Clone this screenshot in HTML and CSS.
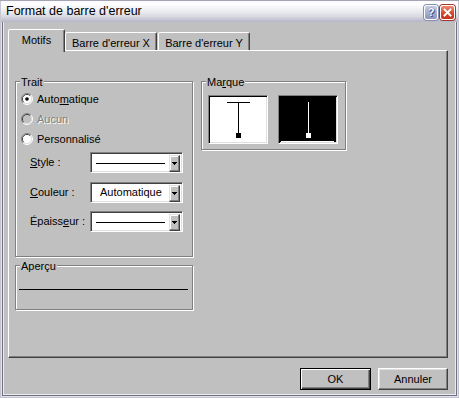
FILE: index.html
```html
<!DOCTYPE html>
<html lang="fr">
<head>
<meta charset="utf-8">
<title>Format de barre d'erreur</title>
<link rel="stylesheet" href="styles.css">
</head>
<body>
<div class="window">
  <div class="titlebar">
    <span class="title">Format de barre d'erreur</span>
    <span class="tb-btn help">?</span>
    <span class="tb-btn close"><svg width="9" height="9" viewBox="0 0 9 9"><path d="M1.5 1.5L7.5 7.5M7.5 1.5L1.5 7.5" stroke="#fff" stroke-width="2" stroke-linecap="square"/></svg></span>
  </div>
  <div class="body">
    <div class="tabs">
      <div class="tab active">Motifs</div>
      <div class="tab tab-x">Barre d'erreur X</div>
      <div class="tab tab-y">Barre d'erreur Y</div>
    </div>
    <div class="panel">
      <div class="col-left">
        <div class="group trait">
          <span class="legend">Trait</span>
          <div class="radio-row">
            <svg class="radio" width="12" height="12" viewBox="0 0 12 12"><circle cx="6" cy="6" r="5" fill="#fff"/><path d="M2.1 9.9A5.5 5.5 0 0 1 9.9 2.1" fill="none" stroke="#808080"/><path d="M9.9 2.1A5.5 5.5 0 0 1 2.1 9.9" fill="none" stroke="#fff"/><path d="M2.8 9.2A4.5 4.5 0 0 1 9.2 2.8" fill="none" stroke="#404040"/><path d="M9.2 2.8A4.5 4.5 0 0 1 2.8 9.2" fill="none" stroke="#dfdfdf"/><circle cx="6" cy="6" r="3.8" fill="#fff"/><circle cx="6" cy="6" r="1.8" fill="#000"/></svg>
            <span>Auto<u>m</u>atique</span>
          </div>
          <div class="radio-row disabled">
            <svg class="radio" width="12" height="12" viewBox="0 0 12 12"><circle cx="6" cy="6" r="5" fill="#c0c0c0"/><path d="M2.1 9.9A5.5 5.5 0 0 1 9.9 2.1" fill="none" stroke="#808080"/><path d="M9.9 2.1A5.5 5.5 0 0 1 2.1 9.9" fill="none" stroke="#fff"/><path d="M2.8 9.2A4.5 4.5 0 0 1 9.2 2.8" fill="none" stroke="#404040"/><path d="M9.2 2.8A4.5 4.5 0 0 1 2.8 9.2" fill="none" stroke="#dfdfdf"/><circle cx="6" cy="6" r="3.8" fill="#c0c0c0"/></svg>
            <span>Aucun</span>
          </div>
          <div class="radio-row">
            <svg class="radio" width="12" height="12" viewBox="0 0 12 12"><circle cx="6" cy="6" r="5" fill="#fff"/><path d="M2.1 9.9A5.5 5.5 0 0 1 9.9 2.1" fill="none" stroke="#808080"/><path d="M9.9 2.1A5.5 5.5 0 0 1 2.1 9.9" fill="none" stroke="#fff"/><path d="M2.8 9.2A4.5 4.5 0 0 1 9.2 2.8" fill="none" stroke="#404040"/><path d="M9.2 2.8A4.5 4.5 0 0 1 2.8 9.2" fill="none" stroke="#dfdfdf"/><circle cx="6" cy="6" r="3.8" fill="#fff"/></svg>
            <span>Personnalisé</span>
          </div>
          <div class="field f1">
            <span class="flabel"><u>S</u>tyle :</span>
            <div class="combo">
              <div class="combo-value"><span class="sample-line"></span></div>
              <span class="drop"><svg width="5" height="3" viewBox="0 0 5 3" shape-rendering="crispEdges"><path d="M0 0h5v1H0zM1 1h3v1H1zM2 2h1v1H2z" fill="#000"/></svg></span>
            </div>
          </div>
          <div class="field f2">
            <span class="flabel"><u>C</u>ouleur :</span>
            <div class="combo">
              <div class="combo-value"><span class="combo-text">Automatique</span></div>
              <span class="drop"><svg width="5" height="3" viewBox="0 0 5 3" shape-rendering="crispEdges"><path d="M0 0h5v1H0zM1 1h3v1H1zM2 2h1v1H2z" fill="#000"/></svg></span>
            </div>
          </div>
          <div class="field f3">
            <span class="flabel">Épaiss<u>e</u>ur :</span>
            <div class="combo">
              <div class="combo-value"><span class="sample-line"></span></div>
              <span class="drop"><svg width="5" height="3" viewBox="0 0 5 3" shape-rendering="crispEdges"><path d="M0 0h5v1H0zM1 1h3v1H1zM2 2h1v1H2z" fill="#000"/></svg></span>
            </div>
          </div>
        </div>
        <div class="group apercu">
          <span class="legend">Aperçu</span>
          <div class="preview-line"></div>
        </div>
      </div>
      <div class="group marque">
        <span class="legend">Ma<u>r</u>que</span>
        <div class="marks">
          <div class="mbox light">
            <svg width="56" height="45" viewBox="0 0 56 45" shape-rendering="crispEdges"><rect x="17" y="5" width="23" height="1" fill="#000"/><rect x="28" y="5" width="1" height="31" fill="#000"/><rect x="26" y="36" width="5" height="5" fill="#000"/></svg>
          </div>
          <div class="mbox dark">
            <svg width="56" height="45" viewBox="0 0 56 45" shape-rendering="crispEdges"><rect x="28" y="5" width="1" height="31" fill="#fff"/><rect x="26" y="36" width="5" height="5" fill="#fff"/><rect x="1" y="44" width="53" height="1" fill="#fff"/></svg>
          </div>
        </div>
      </div>
    </div>
    <div class="buttons">
      <div class="btn default">OK</div>
      <div class="btn">Annuler</div>
    </div>
  </div>
</div>
</body>
</html>
```
FILE: styles.css
```css
* { box-sizing: border-box; }
html, body { margin: 0; padding: 0; }
body {
  width: 459px;
  height: 398px;
  overflow: hidden;
  background: #c0c0c0;
  font-family: "Liberation Sans", Arial, sans-serif;
  font-size: 11px;
  color: #000;
}
.window {
  width: 459px;
  height: 398px;
  display: flex;
  flex-direction: column;
  background: #c0c0c0;
}
.titlebar {
  height: 22px;
  flex: none;
  display: flex;
  align-items: flex-start;
  padding: 0 4px 0 6px;
  border-top: 1px solid #a4a4b4;
  background: linear-gradient(#fafafc 0, #ffffff 15%, #eeeef3 45%, #d8d8e2 75%, #b4b4c6 100%);
  box-shadow: inset 1px 0 #c8c8d0, inset -1px 0 #c8c8d0;
}
.title {
  flex: 1;
  font-size: 12.5px;
  line-height: 15px;
  padding-top: 3px;
  color: #000;
}
.tb-btn {
  width: 14px;
  height: 15px;
  margin-top: 4px;
  border-radius: 3px;
  border: 1px solid #fff;
  display: flex;
  align-items: center;
  justify-content: center;
}
.help {
  background: linear-gradient(#c6cce4, #8c93bb);
  color: #fff;
  font-weight: bold;
  font-size: 11px;
  line-height: 13px;
  text-shadow: 0 0 1px #333a60, 1px 1px 0 #4a5080;
  box-shadow: 0 0 0 1px #8a8fae;
}
.close {
  width: 15px;
  margin-left: 2px;
  background: linear-gradient(#f08a70, #d9442a 60%, #c43218);
  box-shadow: 0 0 0 1px #a03a30;
}
.close svg { filter: drop-shadow(0 0 0.5px #7a1a10); }

.body {
  flex: 1;
  padding: 7px 7px 0 8px;
  box-shadow:
    inset 1px 0 #c4c4cc, inset -1px 0 #c4c4cc, inset 0 -1px #c4c4cc,
    inset 2px 0 #e2e2e8, inset -2px 0 #e2e2e8, inset 0 -2px #e2e2e8,
    inset 3px 0 #6e6e86, inset -3px 0 #6e6e86, inset 0 -3px #6e6e86,
    inset 4px 0 #ececec, inset -4px 0 #ececec, inset 0 -4px #ececec;
}
.tabs {
  display: flex;
  align-items: flex-end;
  height: 21px;
}
.tab {
  height: 18px;
  padding-top: 4px;
  line-height: 13px;
  text-align: center;
  background: #c0c0c0;
  border: 1px solid;
  border-bottom: none;
  border-color: #fff #404040 transparent #fff;
  border-radius: 2px 2px 0 0;
  box-shadow: inset -1px 0 #808080;
  white-space: nowrap;
}
.tab.active {
  width: 57px;
  height: 23px;
  margin-bottom: -2px;
  position: relative;
  z-index: 1;
}
.tab-x { width: 92px; }
.tab-y { width: 92px; margin-left: 1px; }

.panel {
  width: 440px;
  height: 308px;
  display: flex;
  align-items: flex-start;
  gap: 8px;
  padding: 30px 0 0 6px;
  border: 1px solid;
  border-color: #fff #404040 #404040 #fff;
  box-shadow: inset -1px -1px #808080;
}
.col-left {
  display: flex;
  flex-direction: column;
}
.group {
  display: flex;
  flex-direction: column;
  align-items: flex-start;
  border: 1px solid #808080;
  box-shadow: inset 1px 1px #fff, 1px 1px #fff;
}
.legend {
  margin: -6px 0 0 4px;
  padding: 0 1px;
  line-height: 13px;
  background: #c0c0c0;
}
.trait { width: 178px; height: 176px; }
.apercu { width: 178px; height: 45px; margin-top: 8px; }
.marque { width: 145px; height: 69px; }

.radio-row {
  display: flex;
  align-items: center;
  gap: 4px;
  height: 20px;
  padding-left: 5px;
  line-height: 13px;
}
.radio { flex: none; }
.radio-row.disabled span {
  color: #808080;
  text-shadow: 1px 1px 0 #fff;
}
.field {
  display: flex;
  align-items: center;
  padding-left: 14px;
}
.f1 { margin-top: 3px; }
.f2 { margin-top: 9px; }
.f3 { margin-top: 8px; }
.flabel {
  width: 60px;
  line-height: 13px;
}
.combo {
  width: 93px;
  height: 21px;
  display: flex;
  padding: 2px;
  background: #fff;
  border: 1px solid;
  border-color: #808080 #fff #fff #808080;
  box-shadow: inset 1px 1px #404040, inset -1px -1px #dfdfdf;
}
.combo-value {
  flex: 1;
  display: flex;
  align-items: center;
}
.sample-line {
  width: 69px;
  height: 1px;
  margin: 1px 0 0 3px;
  background: #000;
}
.combo-text {
  margin-left: 7px;
  line-height: 13px;
}
.drop {
  width: 11px;
  height: 17px;
  display: flex;
  align-items: center;
  justify-content: center;
  background: #c0c0c0;
  border: 1px solid;
  border-color: #dfdfdf #404040 #404040 #dfdfdf;
  box-shadow: inset -1px -1px #808080, inset 1px 1px #fff;
}
.drop svg { display: block; }
.preview-line {
  width: 169px;
  height: 1px;
  margin: 16px 0 0 3px;
  background: #000;
}
.marks {
  display: flex;
  gap: 10px;
  margin-top: 6px;
  padding-left: 6px;
}
.mbox {
  width: 60px;
  height: 49px;
  padding: 1px;
  border: 1px solid;
  border-color: #808080 #fff #fff #808080;
  box-shadow: inset 1px 1px #000, inset -1px -1px #dfdfdf;
}
.mbox svg { display: block; }
.mbox.light { background: #fff; }
.mbox.dark { background: #000; }

.buttons {
  width: 440px;
  margin-top: 10px;
  display: flex;
  justify-content: flex-end;
  gap: 7px;
}
.btn {
  width: 70px;
  height: 22px;
  display: flex;
  align-items: center;
  justify-content: center;
  background: #c0c0c0;
  border: 1px solid;
  border-color: #fff #404040 #404040 #fff;
  box-shadow: inset -1px -1px #808080, inset 1px 1px #dfdfdf;
}
.btn.default {
  width: 71px;
  border-color: #000;
  box-shadow: inset 1px 1px #fff, inset -1px -1px #404040, inset -2px -2px #808080;
}
```
